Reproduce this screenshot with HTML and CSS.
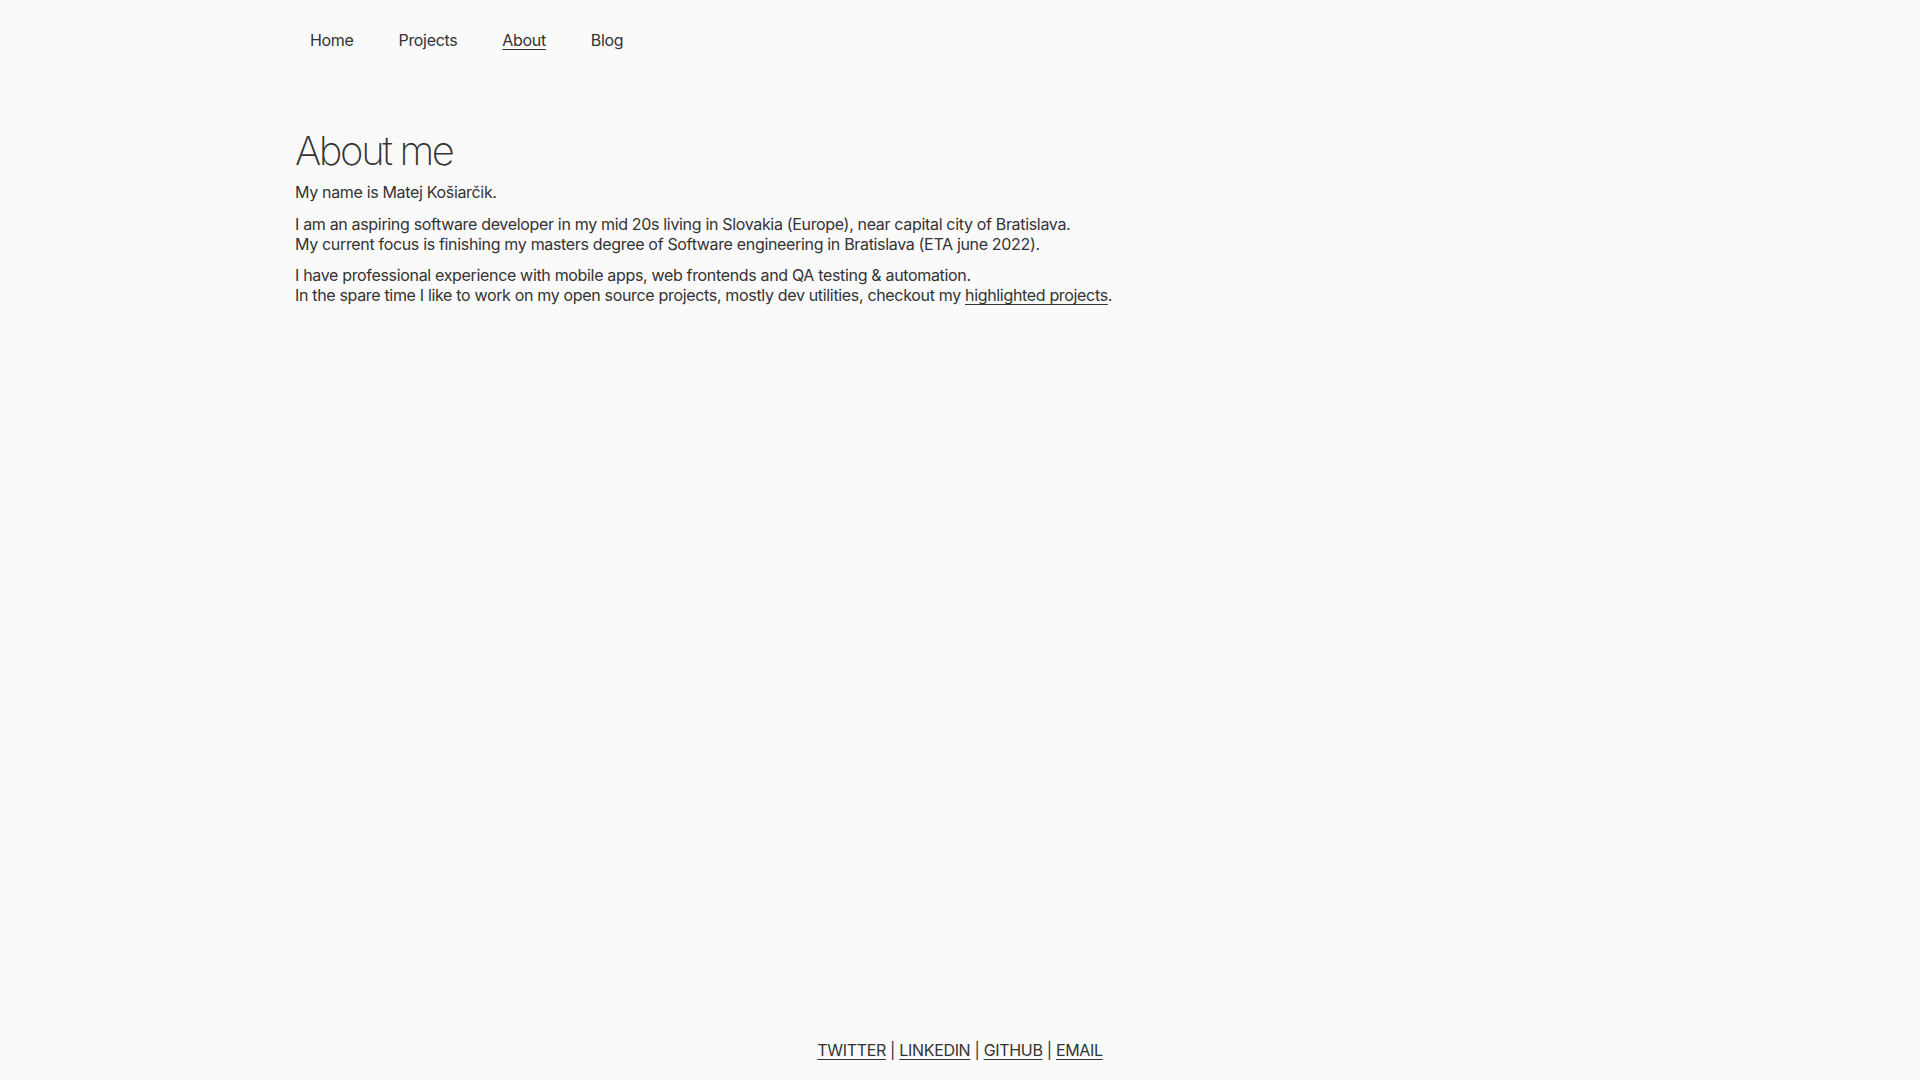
FILE: index.html
```html
<!DOCTYPE html>
<html lang="en">
<head>
<meta charset="utf-8">
<title>About me</title>
<link rel="stylesheet" href="styles.css">
</head>
<body>
<div class="page">
  <nav class="nav">
    <a href="#" class="nav-link">Home</a>
    <a href="#" class="nav-link">Projects</a>
    <a href="#" class="nav-link active">About</a>
    <a href="#" class="nav-link">Blog</a>
  </nav>
  <main class="content">
    <h1 class="title">About me</h1>
    <p class="para">My name is Matej Košiarčik.</p>
    <p class="para">I am an aspiring software developer in my mid 20s living in Slovakia (Europe), near capital city of Bratislava.<br>My current focus is finishing my masters degree of Software engineering in Bratislava (ETA june 2022).</p>
    <p class="para">I have professional experience with mobile apps, web frontends and QA testing &amp; automation.<br>In the spare time I like to work on my open source projects, mostly dev utilities, checkout my <a href="#" class="link">highlighted projects</a>.</p>
  </main>
  <footer class="footer">
    <a href="#" class="link">TWITTER</a> | <a href="#" class="link">LINKEDIN</a> | <a href="#" class="link">GITHUB</a> | <a href="#" class="link">EMAIL</a>
  </footer>
</div>
</body>
</html>
```
FILE: styles.css
```css
html, body {
  margin: 0;
  padding: 0;
  background: #fafafa;
}
body {
  font-family: Inter, "Noto Sans", sans-serif;
  font-size: 16px;
  letter-spacing: -0.33px;
  color: #333333;
}
.page {
  min-height: 100vh;
  display: flex;
  flex-direction: column;
  width: 1330px;
  margin: 0 auto;
}
.nav {
  display: flex;
  gap: 45px;
  padding: 28px 0 0 15px;
  line-height: 24px;
}
.nav-link {
  color: #333333;
  text-decoration: none;
}
.nav-link.active {
  text-decoration: underline;
  text-underline-offset: 3px;
}
.content {
  flex: 1;
  padding-top: 75px;
}
.title {
  font-size: 40px;
  font-weight: 200;
  line-height: 48px;
  margin: 0 0 8px 0;
  letter-spacing: -2.4px;
}
.para {
  margin: 0 0 12px 0;
  line-height: 19.8px;
}
.link {
  color: #333333;
  text-decoration: underline;
  text-underline-offset: 3px;
}
.footer {
  text-align: center;
  line-height: 24px;
  padding-bottom: 18px;
  font-weight: 400;
}
```
